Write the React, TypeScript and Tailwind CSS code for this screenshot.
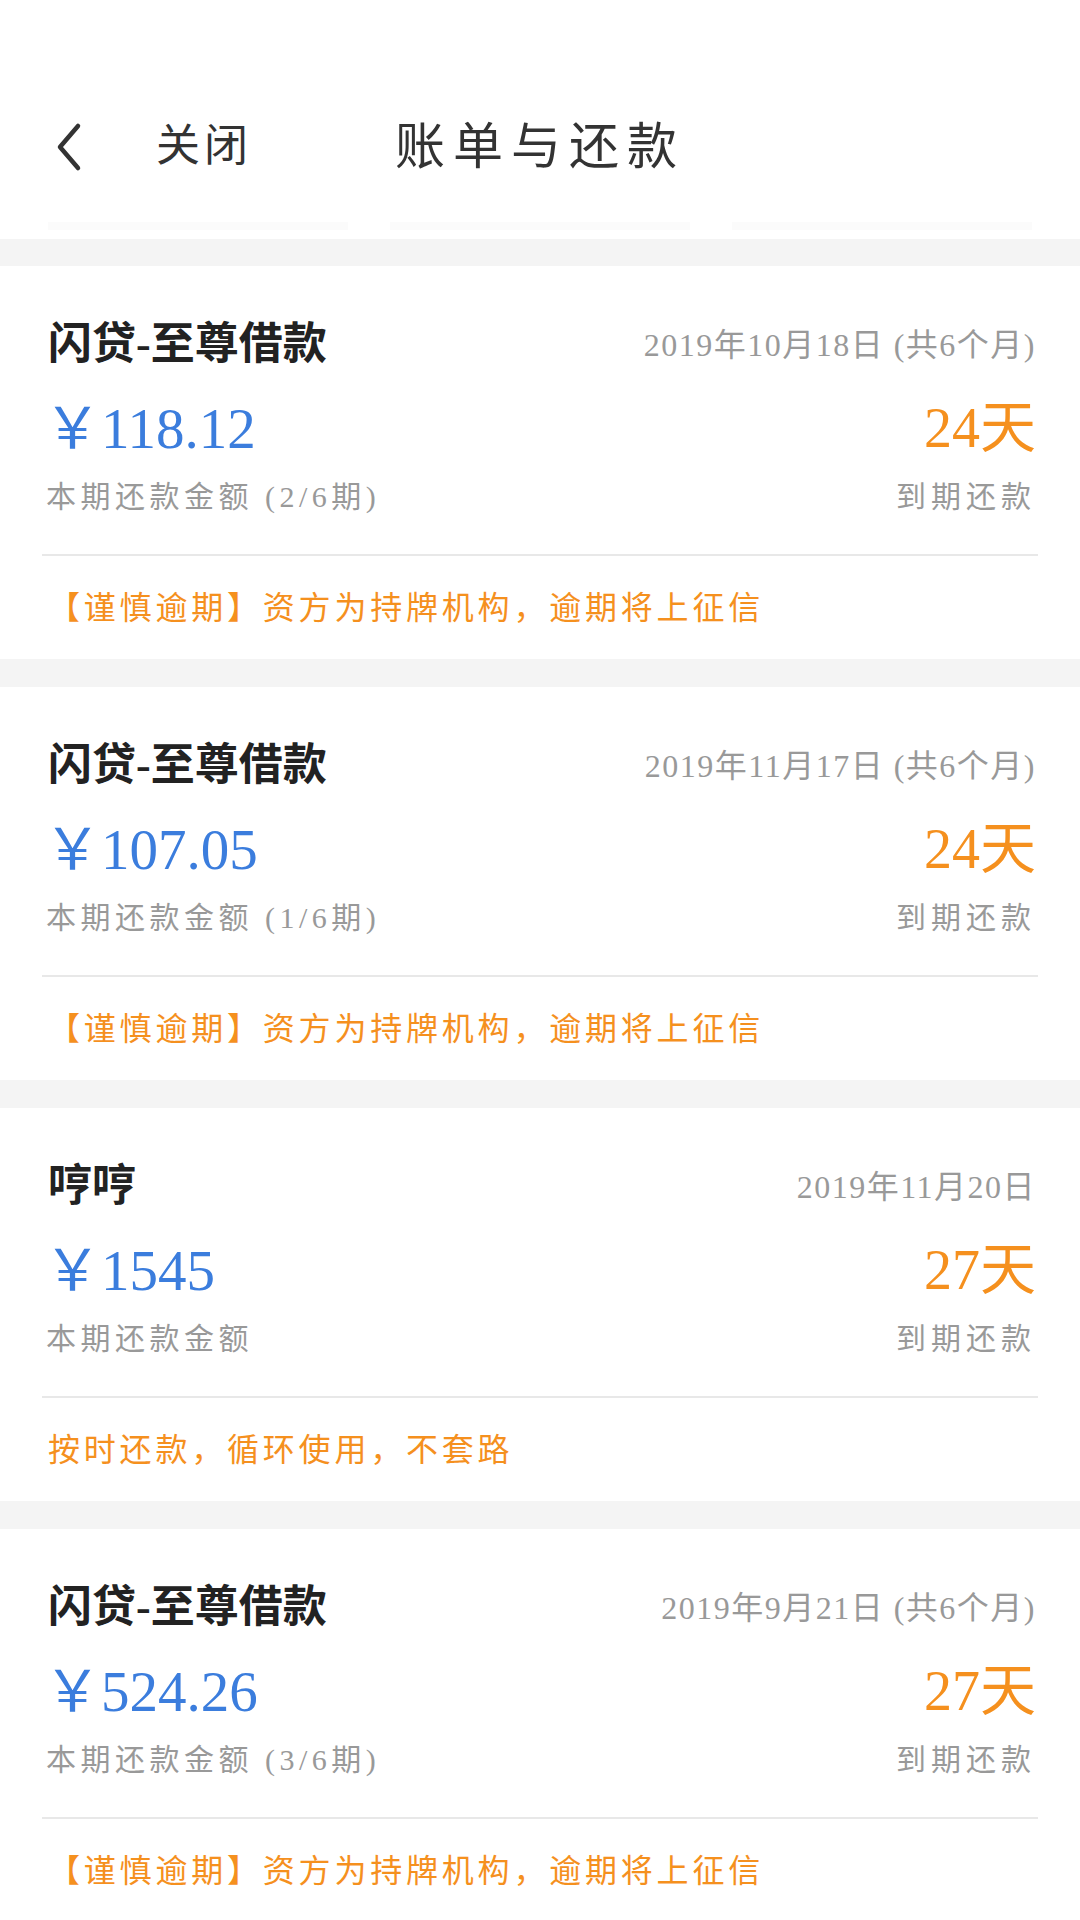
const bills = [
  {
    name: '闪贷-至尊借款',
    date: '2019年10月18日 (共6个月)',
    amount: '118.12',
    period: '本期还款金额 (2/6期)',
    days: '24天',
    note: '【谨慎逾期】资方为持牌机构，逾期将上征信',
  },
  {
    name: '闪贷-至尊借款',
    date: '2019年11月17日 (共6个月)',
    amount: '107.05',
    period: '本期还款金额 (1/6期)',
    days: '24天',
    note: '【谨慎逾期】资方为持牌机构，逾期将上征信',
  },
  {
    name: '哼哼',
    date: '2019年11月20日',
    amount: '1545',
    period: '本期还款金额',
    days: '27天',
    note: '按时还款，循环使用，不套路',
  },
  {
    name: '闪贷-至尊借款',
    date: '2019年9月21日 (共6个月)',
    amount: '524.26',
    period: '本期还款金额 (3/6期)',
    days: '27天',
    note: '【谨慎逾期】资方为持牌机构，逾期将上征信',
  },
];

const font = "font-['Liberation_Serif','Noto_Sans_CJK_SC',serif]";

export default function App() {
  return (
    <div className={`w-[1080px] min-h-[1920px] bg-[#f4f4f4] ${font}`}>
      {/* Header */}
      <div className="bg-white h-[239px] flex flex-col">
        <div className="grid grid-cols-[1fr_auto_1fr] items-center h-[146px] mt-[74px] px-[52px]">
          <div className="flex items-center">
            <svg width="34" height="50" viewBox="0 0 34 50" className="text-[#333]">
              <path d="M26 4 L8 25 L26 46" fill="none" stroke="currentColor" strokeWidth="4.5" strokeLinecap="round" strokeLinejoin="round" />
            </svg>
            <span className="ml-[70px] text-[44px] leading-none text-[#333] tracking-[4px]">关闭</span>
          </div>
          <div className="text-[50px] leading-none text-[#333] tracking-[8px]">账单与还款</div>
          <div />
        </div>
        <div className="flex gap-[42px] px-[48px] mt-auto mb-[9px]">
          <div className="h-[8px] flex-1 bg-[#fbfbfb]" />
          <div className="h-[8px] flex-1 bg-[#fbfbfb]" />
          <div className="h-[8px] flex-1 bg-[#fbfbfb]" />
        </div>
      </div>

      <div className="flex flex-col gap-[28px] pt-[27px]">
        {bills.map((b, i) => (
          <div key={i} className="bg-white px-[44px] pt-[54px] pb-[33px]">
            <div className="flex items-center justify-between h-[50px] pl-[4px]">
              <span className="text-[44px] leading-none font-bold text-[#222]">{b.name}</span>
              <span className="text-[32px] leading-none text-[#999] tracking-[1.5px]">{b.date}</span>
            </div>
            <div className="flex items-center justify-between h-[60px] mt-[28px]">
              <span className="text-[57px] leading-none text-[#3b7ddd]">￥{b.amount}</span>
              <span className="text-[56px] leading-none text-[#f5901e]">{b.days}</span>
            </div>
            <div className="flex items-center justify-between h-[36px] mt-[21px] pl-[2px]">
              <span className="text-[30px] leading-none text-[#999] tracking-[4.5px]">{b.period}</span>
              <span className="text-[30px] leading-none text-[#999] tracking-[5px]">到期还款</span>
            </div>
            <div className="h-[2px] bg-[#e8e8e8] mt-[39px] -mx-[2px]" />
            <div className="flex items-center h-[36px] mt-[34px] pl-[4px]">
              <span className="text-[32px] leading-none text-[#f5901e] tracking-[3.8px]">{b.note}</span>
            </div>
          </div>
        ))}
      </div>
    </div>
  );
}
